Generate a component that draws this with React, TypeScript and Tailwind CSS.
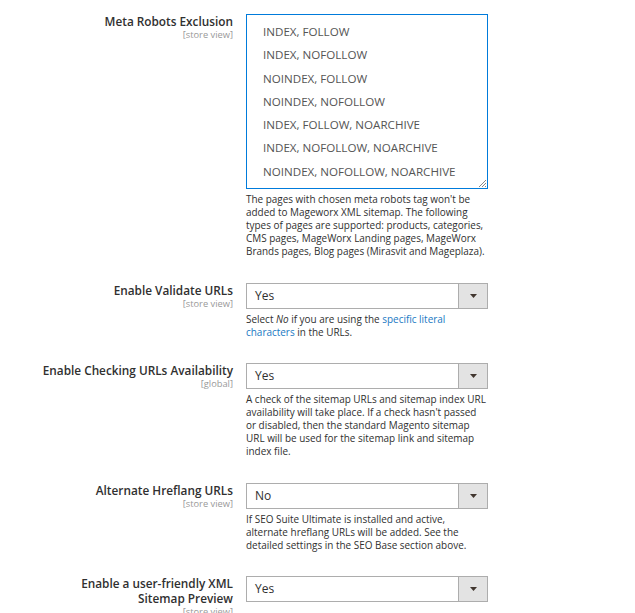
const options = [
  "INDEX, FOLLOW",
  "INDEX, NOFOLLOW",
  "NOINDEX, FOLLOW",
  "NOINDEX, NOFOLLOW",
  "INDEX, FOLLOW, NOARCHIVE",
  "INDEX, NOFOLLOW, NOARCHIVE",
  "NOINDEX, NOFOLLOW, NOARCHIVE",
];

function Label({ lines, scope }: { lines: string[]; scope: string }) {
  return (
    <div className="w-[233px] shrink-0 text-right">
      {lines.map((l) => (
        <div key={l} className="text-[11.8px] font-semibold leading-[15px] text-[#303030]">
          {l}
        </div>
      ))}
      <div className="text-[9.3px] leading-[12px] text-[#999]">[{scope}]</div>
    </div>
  );
}

function Select({ value }: { value: string }) {
  return (
    <div className="flex h-[26px] w-[242px] border border-[#adadad] bg-white">
      <div className="flex-1 pl-[8px] text-[12px] leading-[24px] text-[#303030]">{value}</div>
      <div className="flex w-[29px] items-center justify-center border-l border-[#adadad] bg-[#e3e3e3]">
        <svg width="7" height="4" viewBox="0 0 7 4">
          <path d="M0 0h7L3.5 4z" fill="#41362f" />
        </svg>
      </div>
    </div>
  );
}

function Note({ children }: { children: React.ReactNode }) {
  return <div className="mt-[4px] text-[9.95px] leading-[13px] text-[#303030]">{children}</div>;
}

export default function App() {
  return (
    <div className="min-h-[613px] w-[635px] bg-white pt-[14px]" style={{ fontFamily: '"Open Sans", sans-serif' }}>
      <div className="flex flex-col gap-[24.5px]">
        <div className="flex gap-[13px]">
          <Label lines={["Meta Robots Exclusion"]} scope="store view" />
          <div className="w-[242px]">
            <div className="relative h-[175px] border border-[#007bdb] bg-white pl-[16px] pt-[5px]">
              {options.map((o) => (
                <div key={o} className="text-[11.6px] leading-[23.3px] text-[#555]">
                  {o}
                </div>
              ))}
              <svg className="absolute bottom-[1px] right-[1px]" width="9" height="9" viewBox="0 0 9 9">
                <path d="M9 2L2 9M9 5L5 9M9 8L8 9" stroke="#888" strokeWidth="1" />
              </svg>
            </div>
            <Note>
              The pages with chosen meta robots tag won't be added to Mageworx XML sitemap. The following types of
              pages are supported: products, categories, CMS pages, MageWorx Landing pages, MageWorx Brands pages,
              Blog pages (Mirasvit and Mageplaza).
            </Note>
          </div>
        </div>

        <div className="flex gap-[13px]">
          <Label lines={["Enable Validate URLs"]} scope="store view" />
          <div className="w-[242px]">
            <Select value="Yes" />
            <Note>
              Select <em>No</em> if you are using the{" "}
              <span className="text-[#1979c3]">specific literal characters</span> in the URLs.
            </Note>
          </div>
        </div>

        <div className="flex gap-[13px]">
          <Label lines={["Enable Checking URLs Availability"]} scope="global" />
          <div className="w-[242px]">
            <Select value="Yes" />
            <Note>
              A check of the sitemap URLs and sitemap index URL availability will take place. If a check hasn't
              passed or disabled, then the standard Magento sitemap URL will be used for the sitemap link and
              sitemap index file.
            </Note>
          </div>
        </div>

        <div className="flex gap-[13px]">
          <Label lines={["Alternate Hreflang URLs"]} scope="store view" />
          <div className="w-[242px]">
            <Select value="No" />
            <Note>
              If SEO Suite Ultimate is installed and active, alternate hreflang URLs will be added. See the
              detailed settings in the SEO Base section above.
            </Note>
          </div>
        </div>

        <div className="flex gap-[13px]">
          <Label lines={["Enable a user-friendly XML", "Sitemap Preview"]} scope="store view" />
          <div className="w-[242px]">
            <Select value="Yes" />
          </div>
        </div>
      </div>
    </div>
  );
}
